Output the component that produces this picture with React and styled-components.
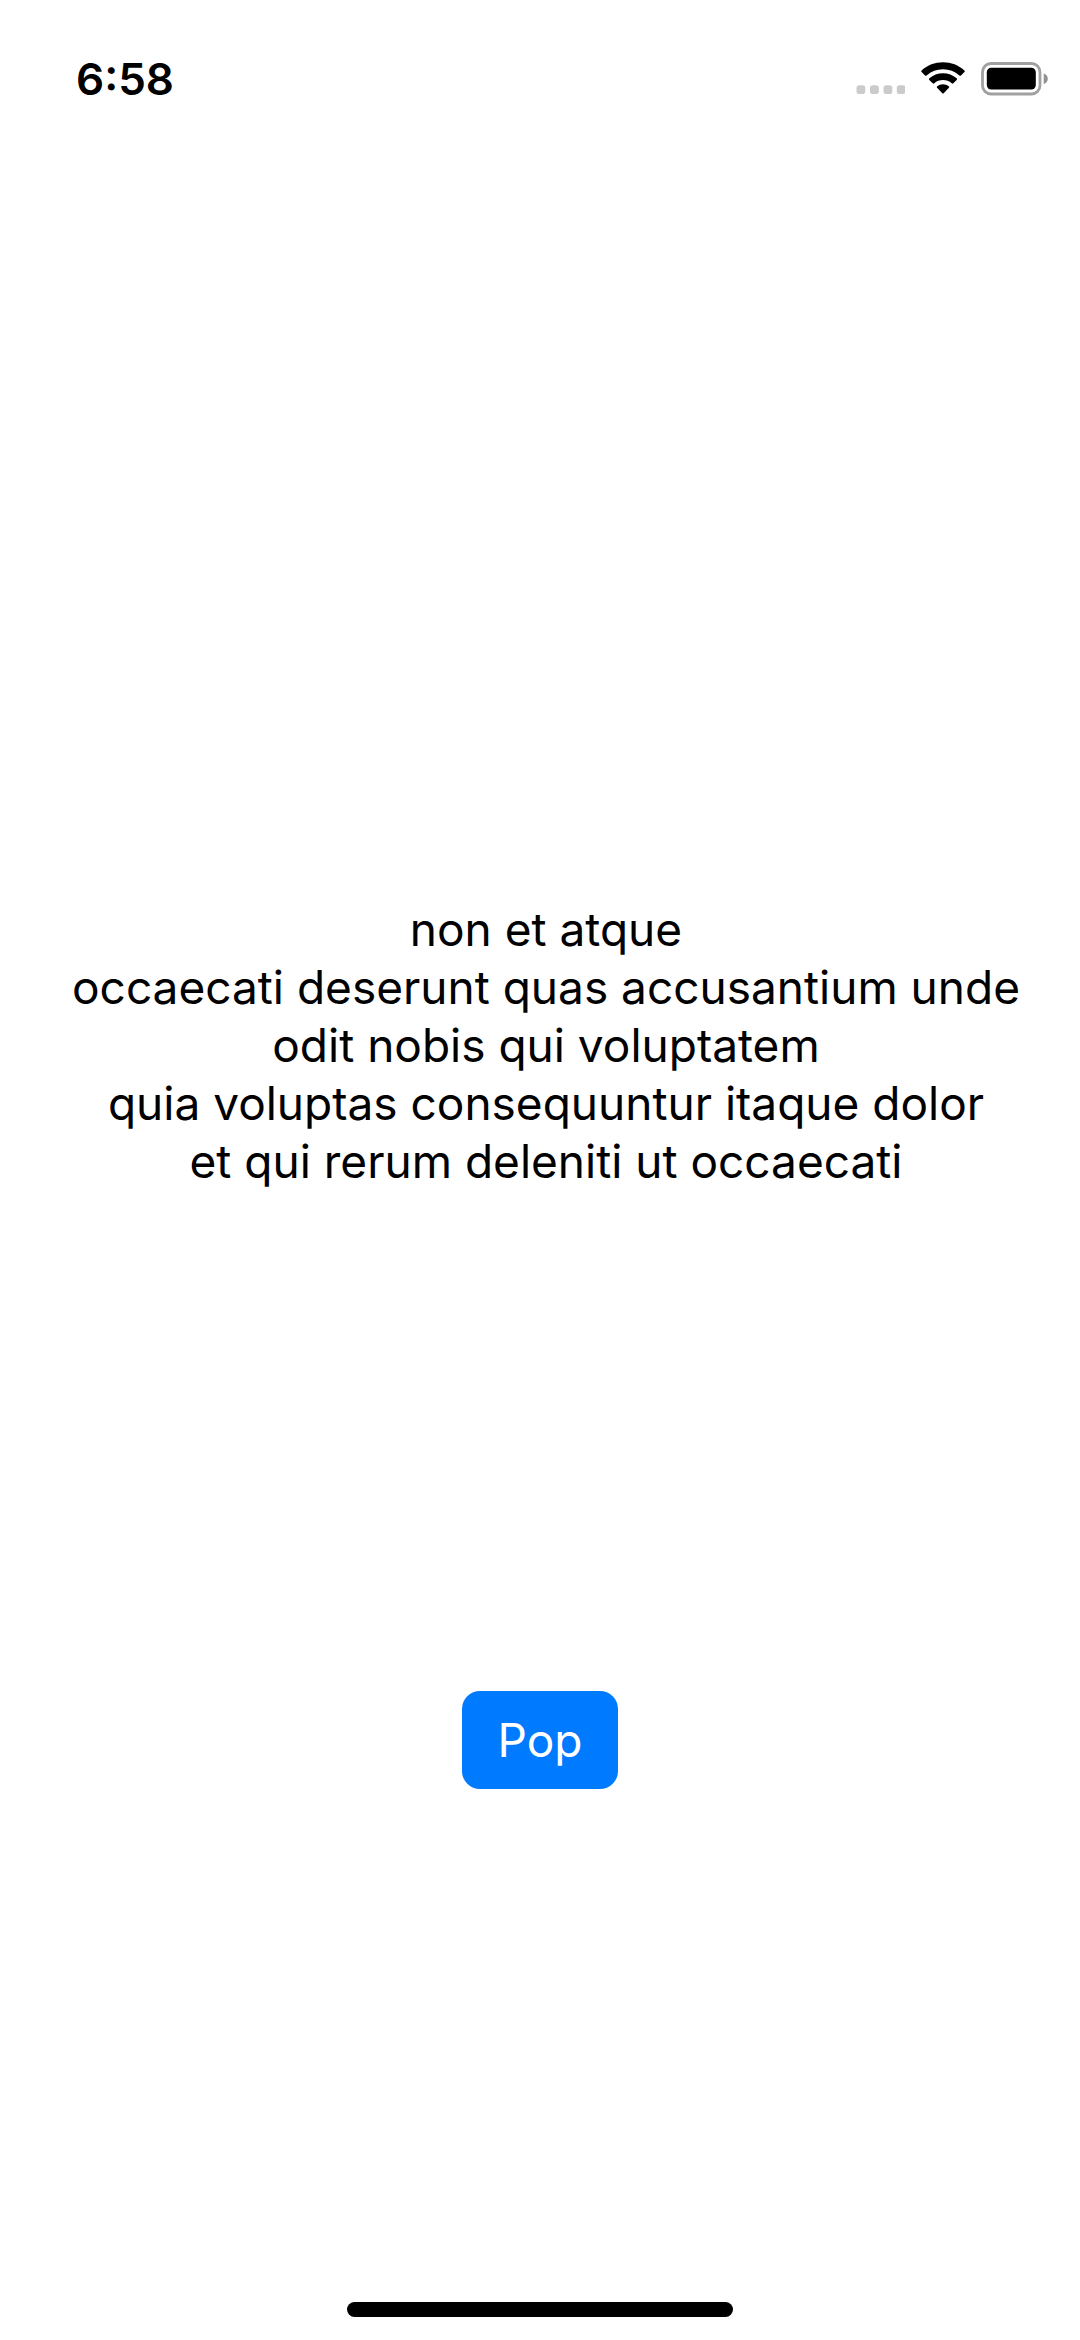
import React from 'react';
import styled, { createGlobalStyle } from 'styled-components';

const GlobalStyle = createGlobalStyle`
  *, *::before, *::after { box-sizing: border-box; }
  body {
    margin: 0;
    background: #fff;
    color: #000;
    font-family: Inter, Roboto, sans-serif;
  }
`;

const Screen = styled.div`
  display: flex;
  flex-direction: column;
  min-height: 100vh;
`;

const StatusBar = styled.header`
  display: flex;
  align-items: center;
  justify-content: space-between;
  height: 158px;
  padding: 0 32px 0 76px;
`;

const Clock = styled.time`
  font-size: 44px;
  line-height: 56px;
  font-weight: 600;
`;

const StatusIcons = styled.div`
  display: flex;
  align-items: center;
  gap: 16px;
`;

const Content = styled.main`
  flex: 1;
  display: flex;
  flex-direction: column;
  align-items: center;
  justify-content: space-evenly;
  padding-top: 240px;
`;

const Message = styled.p`
  margin: 0;
  padding-left: 12px;
  font-size: 46px;
  line-height: 58px;
  text-align: center;
  white-space: pre-line;
`;

const PopButton = styled.button`
  padding: 20px 36px;
  border: 0;
  border-radius: 18px;
  background: #007aff;
  color: #fff;
  font: inherit;
  font-size: 46px;
  line-height: 58px;
  cursor: pointer;
`;

const HomeArea = styled.footer`
  display: flex;
  justify-content: center;
  padding: 11px 0 23px;
`;

const HomeIndicator = styled.div`
  width: 386px;
  height: 15px;
  border-radius: 8px;
  background: #000;
`;

const body = `non et atque
occaecati deserunt quas accusantium unde
odit nobis qui voluptatem
quia voluptas consequuntur itaque dolor
et qui rerum deleniti ut occaecati`;

const SignalIcon = () => (
  <svg width="49" height="34" viewBox="0 0 49 34" fill="#cbcbcb" aria-hidden="true">
    {[1, 14.5, 28, 41.3].map((x) => (
      <rect key={x} x={x - 0.5} y="23.3" width="8.8" height="8.8" rx="2.8" />
    ))}
  </svg>
);

const WifiIcon = () => (
  <svg width="44" height="34" viewBox="0 0 44 34" aria-hidden="true">
    <path d="M0.6 10.1Q-.2 9.3.6 8.5C6.5 3.1 13.8.3 22 .3S37.5 3.1 43.4 8.5Q44.2 9.3 43.4 10.1L40 13.5Q39.2 14.2 38.4 13.5C33.8 9.4 28.2 7.2 22 7.2S10.2 9.4 5.6 13.5Q4.8 14.2 4 13.5Z" />
    <path d="M8.3 17.9Q7.5 17.1 8.3 16.3C12.1 13 16.8 11.2 22 11.2S31.9 13 35.7 16.3Q36.5 17.1 35.7 17.9L32.3 21.3Q31.5 22 30.7 21.3C28.3 19.2 25.3 18.1 22 18.1S15.7 19.2 13.3 21.3Q12.5 22 11.7 21.3Z" />
    <path d="M16.1 25.8Q15.3 25 16.2 24.3C17.9 22.9 19.8 22.2 22 22.2S26.1 22.9 27.8 24.3Q28.7 25 27.9 25.8L22.7 31.2Q22 31.9 21.3 31.2Z" />
  </svg>
);

const BatteryIcon = () => (
  <svg width="67" height="34" viewBox="0 0 67 34" aria-hidden="true">
    <rect x="1.5" y="1.5" width="57.5" height="30.5" rx="8.5" fill="none" stroke="#a0a0a0" strokeWidth="2.8" />
    <rect x="5.8" y="5.8" width="49" height="21.8" rx="4.5" />
    <path d="M62.7 11.6C65.3 12.4 66.8 14.3 66.8 16.8S65.3 21.2 62.7 22Z" fill="#929292" />
  </svg>
);

export default function App() {
  return (
    <>
      <GlobalStyle />
      <Screen>
        <StatusBar>
          <Clock>6:58</Clock>
          <StatusIcons>
            <SignalIcon />
            <WifiIcon />
            <BatteryIcon />
          </StatusIcons>
        </StatusBar>
        <Content>
          <Message>{body}</Message>
          <PopButton type="button">Pop</PopButton>
        </Content>
        <HomeArea>
          <HomeIndicator />
        </HomeArea>
      </Screen>
    </>
  );
}
